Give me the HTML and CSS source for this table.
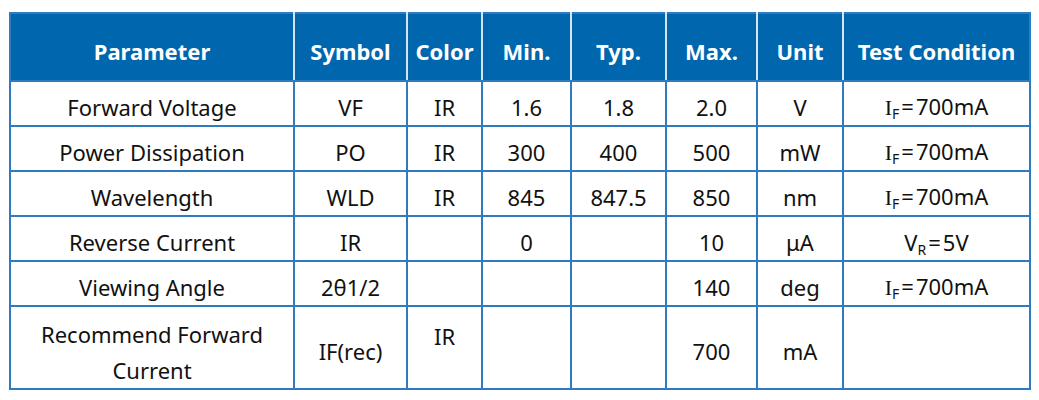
FILE: index.html
```html
<!DOCTYPE html>
<html>
<head>
<meta charset="utf-8">
<link rel="stylesheet" href="styles.css">
</head>
<body>
<table class="spec">
  <colgroup>
    <col class="c1"><col class="c2"><col class="c3"><col class="c4"><col class="c5"><col class="c6"><col class="c7"><col class="c8">
  </colgroup>
  <thead>
    <tr>
      <th>Parameter</th><th>Symbol</th><th>Color</th><th>Min.</th><th>Typ.</th><th>Max.</th><th>Unit</th><th>Test Condition</th>
    </tr>
  </thead>
  <tbody>
    <tr><td>Forward Voltage</td><td>VF</td><td>IR</td><td>1.6</td><td>1.8</td><td>2.0</td><td>V</td><td><span class="ii">I</span><sub>F</sub><span class="eq">=</span>700mA</td></tr>
    <tr><td>Power Dissipation</td><td>PO</td><td>IR</td><td>300</td><td>400</td><td>500</td><td>mW</td><td><span class="ii">I</span><sub>F</sub><span class="eq">=</span>700mA</td></tr>
    <tr><td>Wavelength</td><td>WLD</td><td>IR</td><td>845</td><td>847.5</td><td>850</td><td>nm</td><td><span class="ii">I</span><sub>F</sub><span class="eq">=</span>700mA</td></tr>
    <tr><td>Reverse Current</td><td>IR</td><td></td><td>0</td><td></td><td>10</td><td>μA</td><td>V<sub>R</sub><span class="eq">=</span>5V</td></tr>
    <tr><td>Viewing Angle</td><td>2θ1/2</td><td></td><td></td><td></td><td>140</td><td>deg</td><td><span class="ii">I</span><sub>F</sub><span class="eq">=</span>700mA</td></tr>
    <tr class="tall"><td class="multi">Recommend Forward Current</td><td>IF(rec)</td><td class="top">IR</td><td></td><td></td><td>700</td><td>mA</td><td></td></tr>
  </tbody>
</table>
</body>
</html>
```

FILE: styles.css
```css
html, body {
  margin: 0;
  background: #ffffff;
}
body {
  padding: 12px 10px 0 9px;
  font-family: "Noto Sans", "Open Sans", "Liberation Sans", sans-serif;
  color: #111111;
}
.spec {
  border-collapse: collapse;
  table-layout: fixed;
  width: 1020px;
  font-size: 22px;
}
.c1 { width: 284px; }
.c2 { width: 113px; }
.c3 { width: 75px; }
.c4 { width: 89px; }
.c5 { width: 95px; }
.c6 { width: 91px; }
.c7 { width: 86px; }
.c8 { width: 187px; }
.spec th {
  box-sizing: border-box;
  background: #0066ad;
  color: #ffffff;
  font-weight: 700;
  font-size: 22px;
  height: 68px;
  padding: 7px 0 0;
  text-align: center;
  line-height: 1;
  border: 2px solid #2f7bbf;
  border-left-color: #d4e6f4;
  border-right-color: #d4e6f4;
}
.spec th:first-child { border-left-color: #2f7bbf; }
.spec th:last-child { border-right-color: #2f7bbf; }
.spec td {
  box-sizing: border-box;
  border: 2px solid #2f7bbf;
  height: 45px;
  padding: 6px 0 0;
  text-align: center;
  vertical-align: middle;
  line-height: 1;
}
.spec .ii { font-family: "Liberation Serif", serif; }
.spec .eq { padding: 0 2px; }
.spec sub {
  font-size: 14px;
  vertical-align: -4px;
  line-height: 0;
}
.spec tr.tall td { height: 81px; }
.spec td.multi { line-height: 36px; padding: 9px 16px 0; }
.spec td.top { vertical-align: top; padding-top: 18px; }
```
